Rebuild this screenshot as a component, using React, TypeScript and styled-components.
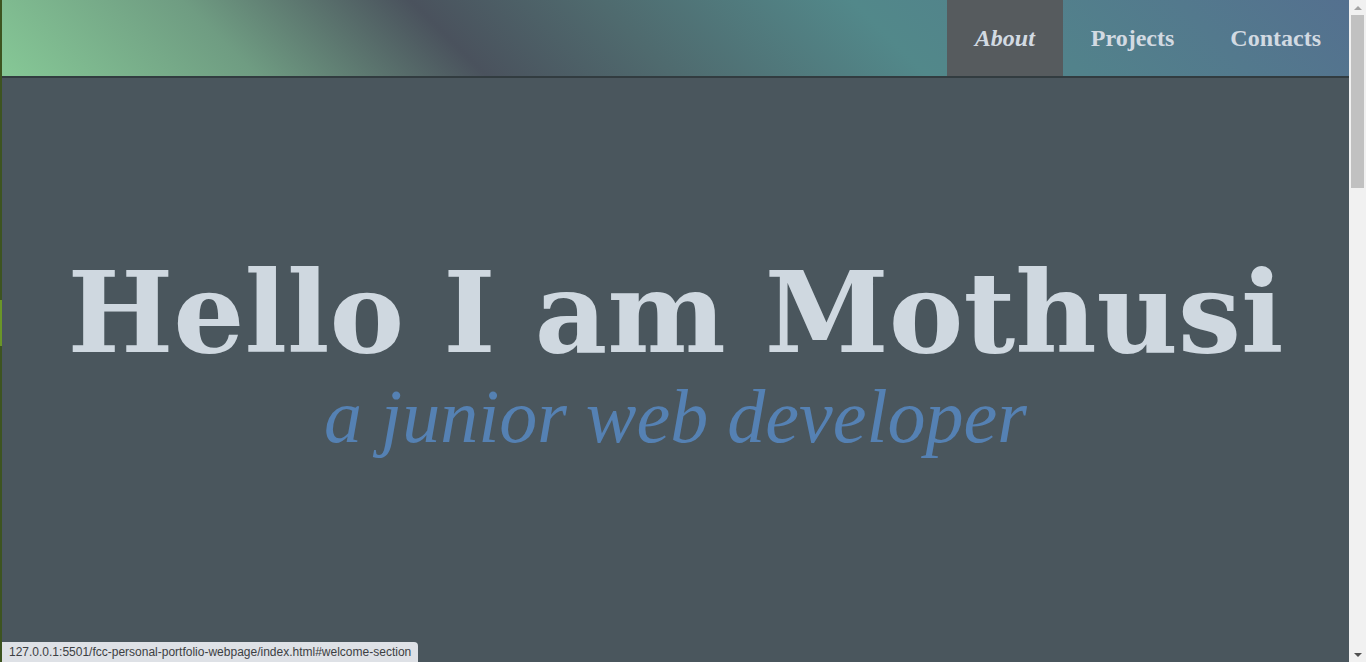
import * as React from "react";
import styled, { createGlobalStyle } from "styled-components";

const GlobalStyle = createGlobalStyle`
  html, body {
    margin: 0;
    padding: 0;
    height: 100%;
    overflow: hidden;
  }
  body {
    background: #4a565d;
    font-family: "DejaVu Serif", Georgia, serif;
  }
  #root {
    height: 100%;
  }
`;

const navItems = [
    { label: "About", href: "#welcome-section", active: true },
    { label: "Projects", href: "#projects", active: false },
    { label: "Contacts", href: "#contacts", active: false }
];

export default function App(): JSX.Element {
    return (
        <>
            <GlobalStyle />
            <Window>
                <EdgeStrip>
                    <EdgeMark />
                </EdgeStrip>
                <Page>
                    <Navbar>
                        <NavList>
                            { navItems.map(item => (
                                <li key={ item.label }>
                                    <NavLink href={ item.href } $active={ item.active }>{ item.label }</NavLink>
                                </li>
                            )) }
                        </NavList>
                    </Navbar>
                    <Welcome id="welcome-section">
                        <Title>Hello I am Mothusi</Title>
                        <Subtitle>a junior web developer</Subtitle>
                    </Welcome>
                </Page>
                <Scrollbar>
                    <Arrow $down={ false } />
                    <Track>
                        <Thumb />
                    </Track>
                    <Arrow $down />
                </Scrollbar>
            </Window>
            <StatusBubble>127.0.0.1:5501/fcc-personal-portfolio-webpage/index.html#welcome-section</StatusBubble>
        </>
    );
}

const Window = styled.div`
  display: flex;
  height: 100%;
  width: 100%;
`;

const EdgeStrip = styled.div`
  flex: 0 0 2px;
  display: flex;
  flex-direction: column;
  padding-top: 300px;
  background: #3d5420;
`;

const EdgeMark = styled.div`
  height: 46px;
  background: #6a9628;
`;

const Page = styled.div`
  flex: 1;
  display: flex;
  flex-direction: column;
  min-width: 0;
`;

const Navbar = styled.nav`
  height: 76px;
  display: flex;
  justify-content: flex-end;
  border-bottom: 2px solid #323c40;
  background: linear-gradient(
    45deg,
    #86c896 0%,
    #6f9c82 18%,
    #4a525d 34%,
    #4f6a6e 47%,
    #52888a 65%,
    #52828b 76%,
    #54708f 100%
  );
`;

const NavList = styled.ul`
  display: flex;
  margin: 0;
  padding: 0;
  list-style: none;
`;

const NavLink = styled.a<{ $active: boolean }>`
  display: flex;
  align-items: center;
  height: 100%;
  padding: 0 28px;
  font-family: "Liberation Serif", "Times New Roman", serif;
  font-size: 24px;
  font-weight: bold;
  font-style: ${ p => p.$active ? "italic" : "normal" };
  color: #d2dae2;
  text-decoration: none;
  background: ${ p => p.$active ? "#565b5e" : "transparent" };
`;

const Welcome = styled.section`
  flex: 1;
  display: flex;
  flex-direction: column;
  align-items: center;
  padding-top: 179px;
`;

const Title = styled.h1`
  margin: 0;
  font-size: 112px;
  line-height: 1;
  font-weight: bold;
  color: #cfd8e0;
  white-space: nowrap;
`;

const Subtitle = styled.p`
  margin: 9px 0 0;
  font-family: "Liberation Serif", "Times New Roman", serif;
  font-size: 76px;
  line-height: 1;
  font-style: italic;
  color: #5581b3;
  white-space: nowrap;
`;

const Scrollbar = styled.div`
  flex: 0 0 17px;
  display: flex;
  flex-direction: column;
  background: #f1f1f1;
`;

const Track = styled.div`
  flex: 1;
  padding: 0 2px;
`;

const Thumb = styled.div`
  height: 173px;
  background: #c1c1c1;
`;

const Arrow = styled.div<{ $down: boolean }>`
  height: 15px;
  display: flex;
  align-items: center;
  justify-content: center;
  &::before {
    content: "";
    border-left: 4px solid transparent;
    border-right: 4px solid transparent;
    ${ p => p.$down ? "border-top: 4px solid #505050;" : "border-bottom: 4px solid #a3a3a3;" }
  }
`;

const StatusBubble = styled.div`
  position: fixed;
  left: 2px;
  bottom: 0;
  height: 20px;
  padding: 0 7px;
  display: flex;
  align-items: center;
  background: #dee1e6;
  border-top-right-radius: 4px;
  font-family: "Liberation Sans", Arial, sans-serif;
  font-size: 12px;
  color: #3c4043;
`;
